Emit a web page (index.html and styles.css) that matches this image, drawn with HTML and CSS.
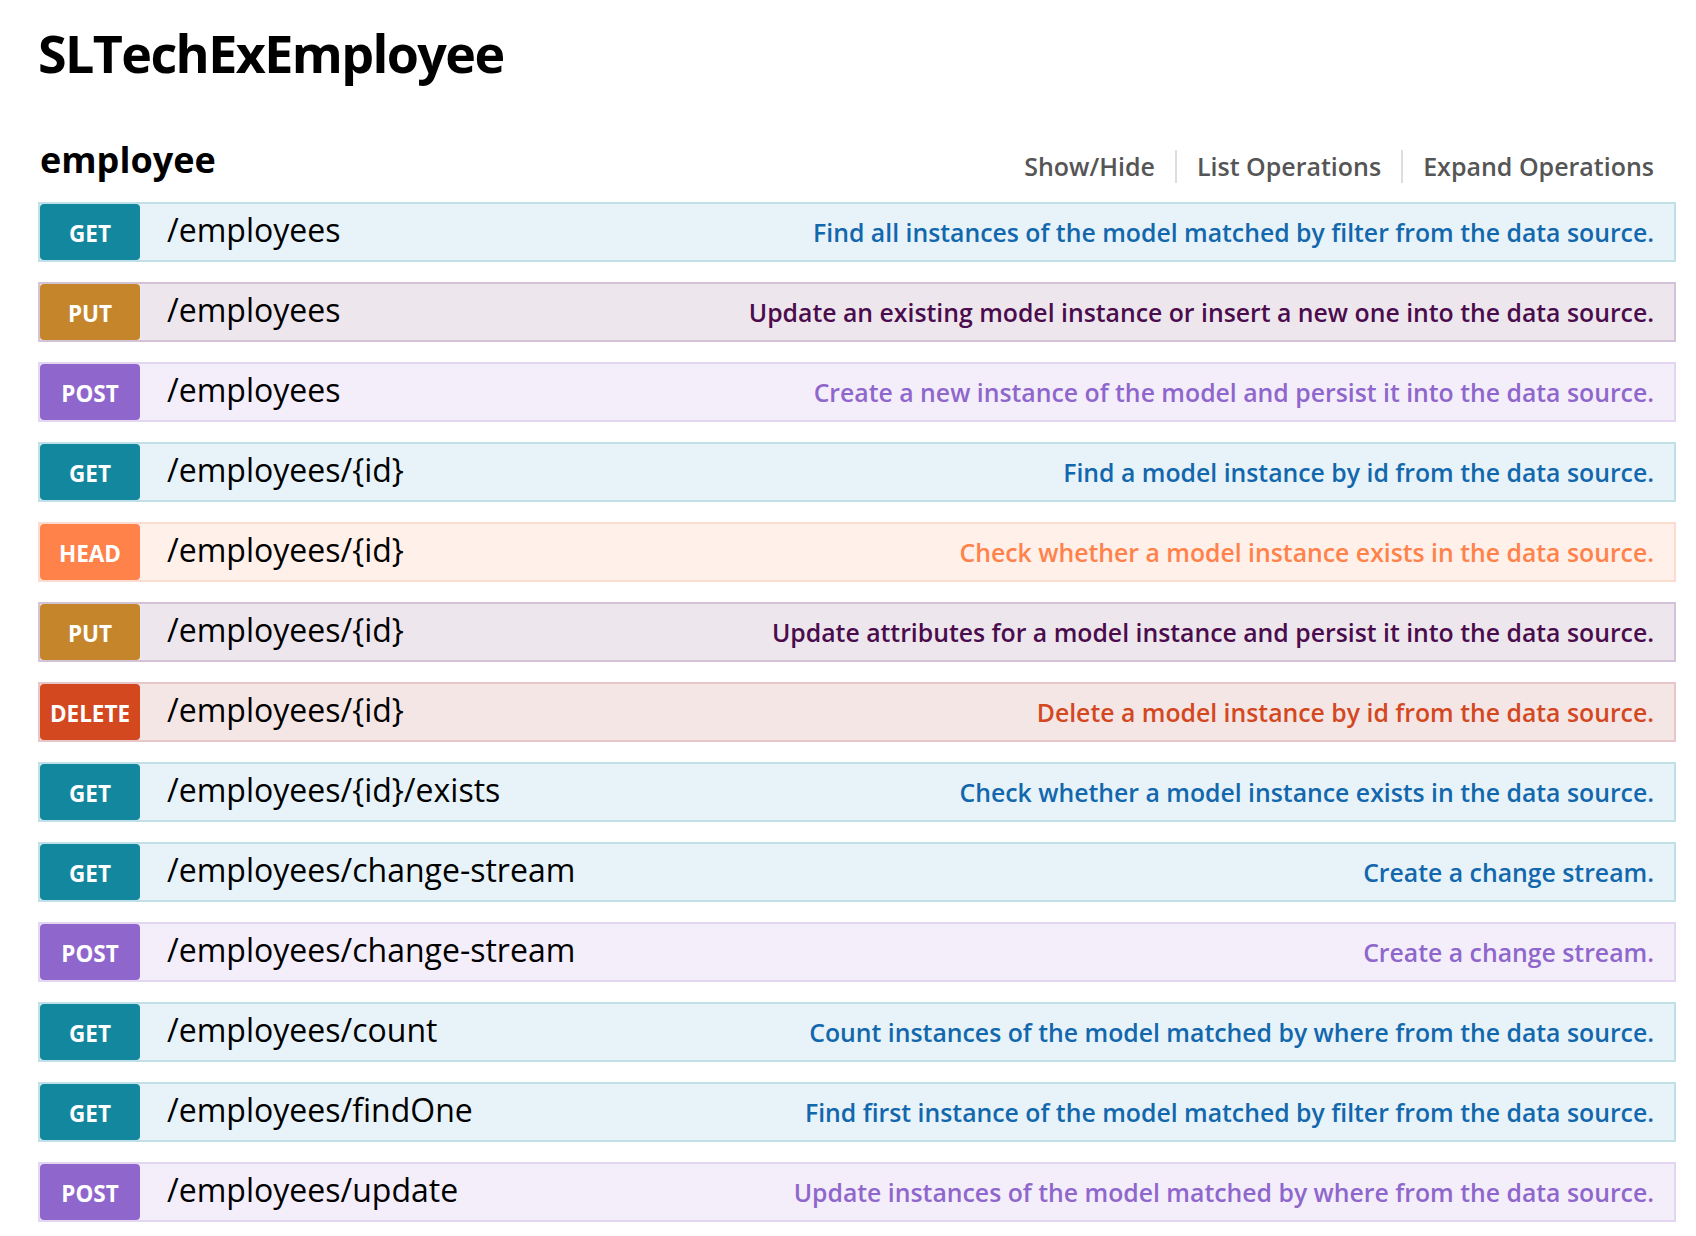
FILE: index.html
```html
<!DOCTYPE html>
<html>
<head>
<meta charset="utf-8">
<title>SLTechExEmployee</title>
<link rel="stylesheet" href="styles.css">
</head>
<body>
<div class="page">
  <h1 class="title">SLTechExEmployee</h1>
  <div class="resource">
    <div class="res-head">
      <h2 class="res-name">employee</h2>
      <ul class="res-links">
        <li>Show/Hide</li>
        <li>List Operations</li>
        <li>Expand Operations</li>
      </ul>
    </div>
    <ul class="ops">
      <li class="op get"><span class="method">GET</span><span class="path">/employees</span><span class="desc">Find all instances of the model matched by filter from the data source.</span></li>
      <li class="op put"><span class="method">PUT</span><span class="path">/employees</span><span class="desc">Update an existing model instance or insert a new one into the data source.</span></li>
      <li class="op post"><span class="method">POST</span><span class="path">/employees</span><span class="desc">Create a new instance of the model and persist it into the data source.</span></li>
      <li class="op get"><span class="method">GET</span><span class="path">/employees/{id}</span><span class="desc">Find a model instance by id from the data source.</span></li>
      <li class="op head"><span class="method">HEAD</span><span class="path">/employees/{id}</span><span class="desc">Check whether a model instance exists in the data source.</span></li>
      <li class="op put"><span class="method">PUT</span><span class="path">/employees/{id}</span><span class="desc">Update attributes for a model instance and persist it into the data source.</span></li>
      <li class="op delete"><span class="method">DELETE</span><span class="path">/employees/{id}</span><span class="desc">Delete a model instance by id from the data source.</span></li>
      <li class="op get"><span class="method">GET</span><span class="path">/employees/{id}/exists</span><span class="desc">Check whether a model instance exists in the data source.</span></li>
      <li class="op get"><span class="method">GET</span><span class="path">/employees/change-stream</span><span class="desc">Create a change stream.</span></li>
      <li class="op post"><span class="method">POST</span><span class="path">/employees/change-stream</span><span class="desc">Create a change stream.</span></li>
      <li class="op get"><span class="method">GET</span><span class="path">/employees/count</span><span class="desc">Count instances of the model matched by where from the data source.</span></li>
      <li class="op get"><span class="method">GET</span><span class="path">/employees/findOne</span><span class="desc">Find first instance of the model matched by filter from the data source.</span></li>
      <li class="op post"><span class="method">POST</span><span class="path">/employees/update</span><span class="desc">Update instances of the model matched by where from the data source.</span></li>
    </ul>
  </div>
</div>
</body>
</html>
```
FILE: styles.css
```css
html, body {
  margin: 0;
  padding: 0;
  background: #ffffff;
}
body {
  font-family: "Open Sans", "DejaVu Sans", sans-serif;
  color: #000;
}
.page {
  padding: 21px 20px 0 38px;
}
.title {
  margin: 0;
  font-size: 52px;
  font-weight: 700;
  line-height: 64px;
  letter-spacing: -1.6px;
}
.res-head {
  display: flex;
  align-items: flex-end;
  justify-content: space-between;
  margin-top: 55px;
  height: 40px;
  margin-bottom: 22px;
}
.res-name {
  margin: 0;
  font-size: 36px;
  font-weight: 700;
  line-height: 40px;
  padding-left: 2px;
}
.res-links {
  display: flex;
  list-style: none;
  margin: 0 0 -3px 0;
  padding: 0 22px 0 0;
}
.res-links li {
  font-size: 25px;
  font-weight: 600;
  color: #555555;
  padding: 0 20px;
  line-height: 33px;
  border-right: 2px solid #dddddd;
}
.res-links li:last-child {
  border-right: none;
  padding-right: 0;
}
.ops {
  list-style: none;
  margin: 0;
  padding: 0;
  display: flex;
  flex-direction: column;
  gap: 20px;
}
.op {
  display: flex;
  align-items: center;
  height: 56px;
  border: 2px solid;
}
.method {
  width: 100px;
  height: 56px;
  flex: none;
  display: flex;
  align-items: center;
  justify-content: center;
  color: #fff;
  font-weight: 700;
  font-size: 22.5px;
  border-radius: 4px;
  padding-top: 2px;
  box-sizing: border-box;
}
.path {
  margin-left: 27px;
  font-size: 32px;
  flex: none;
  padding-bottom: 5px;
}
.desc {
  margin-left: auto;
  padding-right: 20px;
  font-size: 24.8px;
  font-weight: 600;
  padding-bottom: 0;
}
.get { background: #e7f3f8; border-color: #c0e0e8; }
.get .method { background: #13879e; }
.get .desc { color: #1267ad; }
.put { background: #ede7ed; border-color: #d4c2d8; }
.put .method { background: #c5862b; }
.put .desc { color: #4b0c4d; }
.post { background: #f4eefa; border-color: #e2d6f1; }
.post .method { background: #8f67cc; }
.post .desc { color: #8f67cc; }
.head { background: #fff0ea; border-color: #fcdcd0; }
.head .method { background: #ff824b; }
.head .desc { color: #ff824b; }
.delete { background: #f5e6e6; border-color: #e6c6c8; }
.delete .method { background: #d3481f; }
.delete .desc { color: #d3481f; }
```
